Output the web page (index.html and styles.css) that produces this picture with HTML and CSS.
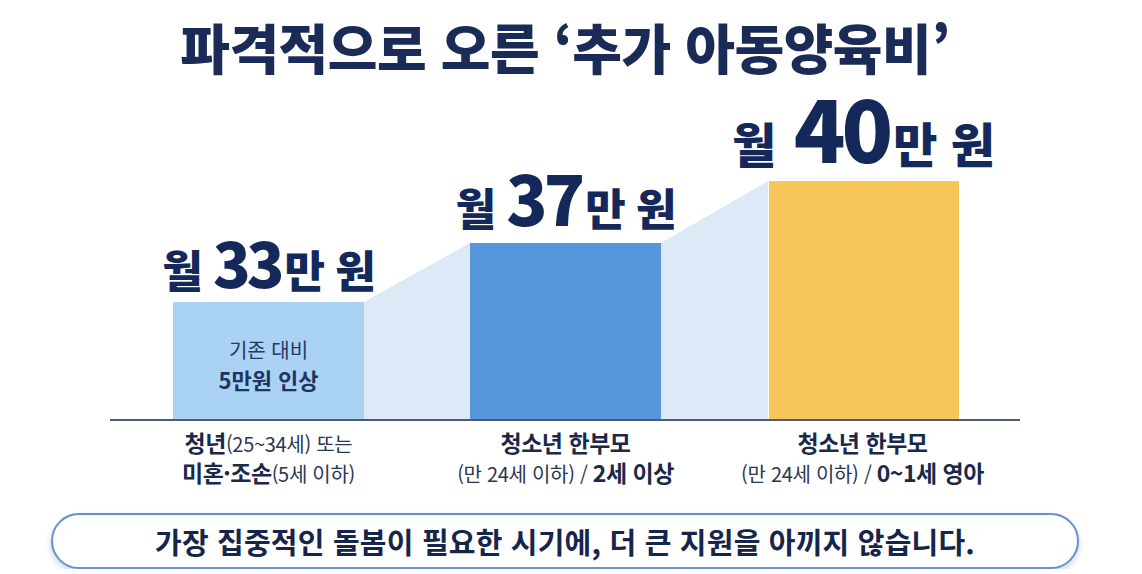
FILE: index.html
```html
<!DOCTYPE html>
<html lang="ko">
<head>
<meta charset="utf-8">
<title>추가 아동양육비</title>
<link rel="stylesheet" href="styles.css">
</head>
<body>
<div class="page">
  <h1 class="title">파격적으로 오른 ‘추가 아동양육비’</h1>

  <div class="chart">
    <div class="col">
      <div class="amount a33">월 <span class="num">33</span>만 원</div>
      <div class="bar bar1">
        <span class="bar-note">기존 대비</span>
        <strong class="bar-strong">5만원 인상</strong>
      </div>
    </div>
    <svg class="conn conn1" viewBox="0 0 106 176" preserveAspectRatio="none">
      <polygon points="0,59 106,0 106,176 0,176" fill="#dde9f6"/>
    </svg>
    <div class="col">
      <div class="amount a37">월 <span class="num">37</span>만 원</div>
      <div class="bar bar2"></div>
    </div>
    <svg class="conn conn2" viewBox="0 0 107 238" preserveAspectRatio="none">
      <polygon points="0,62 107,0 107,238 0,238" fill="#dde9f6"/>
    </svg>
    <div class="col">
      <div class="amount a40">월 <span class="num">40</span>만 원</div>
      <div class="bar bar3"></div>
    </div>
  </div>

  <div class="captions">
    <div class="cap">
      <div><b>청년</b>(25~34세) 또는</div>
      <div><b>미혼·조손</b>(5세 이하)</div>
    </div>
    <div class="cap-gap"></div>
    <div class="cap">
      <div><b>청소년 한부모</b></div>
      <div>(만 24세 이하) / <b>2세 이상</b></div>
    </div>
    <div class="cap-gap"></div>
    <div class="cap">
      <div><b>청소년 한부모</b></div>
      <div>(만 24세 이하) / <b>0~1세 영아</b></div>
    </div>
  </div>

  <div class="pill">가장 집중적인 돌봄이 필요한 시기에, 더 큰 지원을 아끼지 않습니다.</div>
</div>
</body>
</html>
```

FILE: styles.css
```css
* { box-sizing: border-box; }

html, body {
  margin: 0;
  padding: 0;
  background: #ffffff;
}

body {
  font-family: "Noto Sans CJK KR", "Noto Sans", sans-serif;
  color: #16295a;
}

.page {
  width: 1130px;
  display: flex;
  flex-direction: column;
  align-items: center;
}

.title {
  margin: 0;
  padding-top: 20px;
  font-size: 54px;
  line-height: 54px;
  font-weight: 900;
  color: #1a2b57;
  letter-spacing: -0.5px;
  white-space: nowrap;
}

.chart {
  width: 910px;
  height: 347px;
  padding-left: 63px;
  display: flex;
  align-items: flex-end;
  border-bottom: 2px solid #4d5b75;
}

.col {
  width: 191px;
  display: flex;
  flex-direction: column;
  align-items: center;
}

.amount {
  white-space: nowrap;
  font-weight: 900;
  font-size: 44px;
  line-height: 1;
  color: #142859;
  letter-spacing: -1px;
}

.amount .num {
  letter-spacing: -4px;
  margin-right: 4px;
}

.a33 { margin-bottom: 10px; }
.a33 .num { font-size: 62px; }
.a37 { margin-bottom: 12px; }
.a37 .num { font-size: 68px; }
.a40 { margin-bottom: 13px; font-size: 48px; letter-spacing: 0; }
.a40 .num { font-size: 85px; margin-left: 4px; }

.bar {
  width: 100%;
}

.bar1 {
  height: 117px;
  background: #a9d2f3;
  display: flex;
  flex-direction: column;
  align-items: center;
  padding-top: 35px;
  color: #243a63;
}

.bar-note {
  font-size: 20px;
  line-height: 26px;
  font-weight: 400;
}

.bar-strong {
  margin-top: 2px;
  font-size: 22px;
  line-height: 28px;
  font-weight: 700;
  color: #1f3460;
}

.bar2 {
  height: 176px;
  background: #5596dc;
}

.bar3 {
  width: 190px;
  height: 238px;
  background: #f6c65a;
}

.conn {
  display: block;
  flex: none;
}

.conn1 { width: 106px; height: 176px; }
.conn2 { width: 107px; height: 238px; }

.captions {
  width: 910px;
  padding-left: 63px;
  margin-top: 7px;
  display: flex;
}

.cap {
  width: 191px;
  display: flex;
  flex-direction: column;
  align-items: center;
  white-space: nowrap;
  font-size: 20px;
  line-height: 29px;
  font-weight: 400;
  color: #2a3552;
  letter-spacing: -0.3px;
}

.cap b {
  font-size: 23px;
  font-weight: 700;
  color: #1a2849;
  letter-spacing: -0.5px;
}

.cap-gap { width: 106px; flex: none; }

.pill {
  margin-top: 25px;
  width: 1028px;
  height: 56px;
  border: 2.5px solid #6693cc;
  border-radius: 28px;
  background: #ffffff;
  box-shadow: 0 3px 6px rgba(70, 100, 150, 0.28);
  display: flex;
  align-items: center;
  justify-content: center;
  font-size: 29px;
  font-weight: 700;
  color: #16254a;
  letter-spacing: 0.2px;
  white-space: nowrap;
}
```
